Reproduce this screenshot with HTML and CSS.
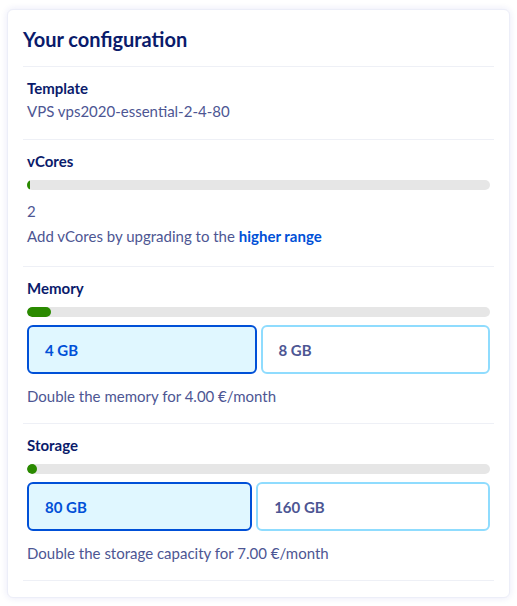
FILE: index.html
```html
<!DOCTYPE html>
<html lang="en">
<head>
<meta charset="utf-8">
<title>Your configuration</title>
<link rel="stylesheet" href="styles.css">
</head>
<body>
<div class="card">
  <h2 class="title">Your configuration</h2>
  <section class="section section-template">
    <div class="label">Template</div>
    <div class="value value-template">VPS vps2020-essential-2-4-80</div>
  </section>
  <section class="section section-vcores">
    <div class="label">vCores</div>
    <div class="bar"><div class="fill fill-sliver"></div></div>
    <div class="value value-count">2</div>
    <div class="value value-hint">Add vCores by upgrading to the <a class="link" href="#">higher range</a></div>
  </section>
  <section class="section">
    <div class="label">Memory</div>
    <div class="bar"><div class="fill" style="width:24px"></div></div>
    <div class="options">
      <button class="option selected">4 GB</button>
      <button class="option">8 GB</button>
    </div>
    <div class="value value-note">Double the memory for 4.00 €/month</div>
  </section>
  <section class="section">
    <div class="label">Storage</div>
    <div class="bar"><div class="fill" style="width:10px"></div></div>
    <div class="options">
      <button class="option selected">80 GB</button>
      <button class="option">160 GB</button>
    </div>
    <div class="value value-note">Double the storage capacity for 7.00 €/month</div>
  </section>
</div>
</body>
</html>
```
FILE: styles.css
```css
* { box-sizing: border-box; }
html, body { margin: 0; padding: 0; background: #ffffff; }
body {
  font-family: "Lato", "Liberation Sans", sans-serif;
  padding: 9px 7px;
}
.card {
  width: 503px;
  background: #fff;
  border: 1px solid #eceef8;
  border-radius: 6px;
  box-shadow: 0 0 7px rgba(30, 40, 180, 0.10);
  padding: 15px 15px 16px;
}
.title {
  margin: 0 0 13px;
  font-size: 20px;
  line-height: 28px;
  font-weight: 700;
  color: #0a1b6b;
  border-bottom: 1px solid #eef0f6;
  padding-bottom: 13px;
  margin-bottom: 0;
}
.section {
  padding: 10px 4px 16px;
  border-bottom: 1px solid #eef0f6;
}
.label {
  font-size: 15px;
  line-height: 22px;
  font-weight: 700;
  color: #0a1b6b;
}
.value {
  font-size: 15px;
  line-height: 22px;
  color: #4d5693;
}
.value-template { margin-top: 1px; margin-bottom: 1px; }
.value-count { margin-top: 10px; }
.value-hint { margin-top: 3px; margin-bottom: 3px; }
.value-note { margin-top: 11px; }
.link {
  color: #0050d7;
  font-weight: 700;
  text-decoration: none;
}
.bar {
  margin-top: 8px;
  height: 10px;
  border-radius: 5px;
  background: #e6e6e6;
  overflow: hidden;
}
.fill {
  height: 10px;
  border-radius: 5px;
  background: #2a8a00;
}
.fill-sliver { width: 3px; border-radius: 5px 2px 2px 5px; }
.options {
  display: flex;
  gap: 4px;
  margin-top: 8px;
}
.option {
  flex: 1 1 auto;
  height: 49px;
  text-align: left;
  padding: 0 16px;
  font-family: inherit;
  font-size: 15px;
  font-weight: 700;
  color: #4d5693;
  background: #fff;
  border: 2px solid #8fdcfe;
  border-radius: 6px;
}
.option.selected {
  color: #0050d7;
  background: #e0f7ff;
  border-color: #0050d7;
}
```
